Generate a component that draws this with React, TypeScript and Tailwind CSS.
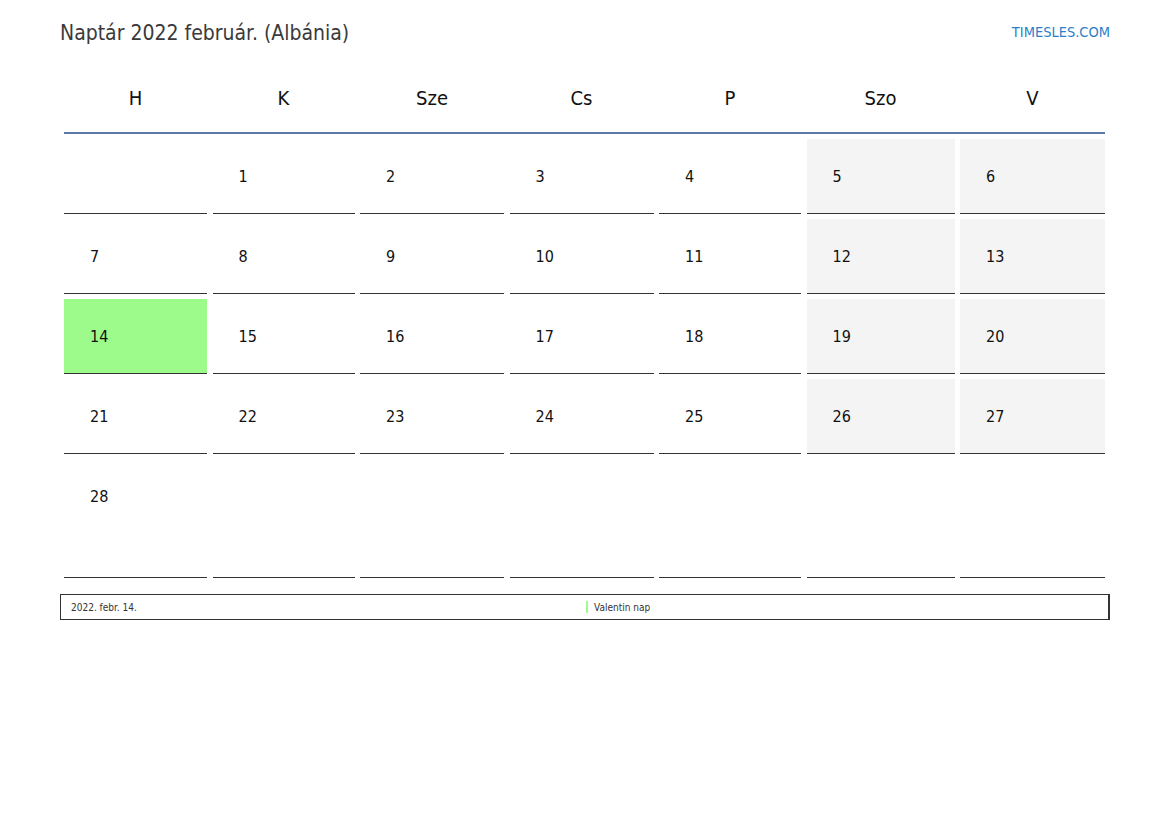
import React from 'react';

const days = ['H', 'K', 'Sze', 'Cs', 'P', 'Szo', 'V'];

const weeks: (number | null)[][] = [
  [null, 1, 2, 3, 4, 5, 6],
  [7, 8, 9, 10, 11, 12, 13],
  [14, 15, 16, 17, 18, 19, 20],
  [21, 22, 23, 24, 25, 26, 27],
  [28, null, null, null, null, null, null],
];

const font = { fontFamily: '"DejaVu Sans Condensed", "DejaVu Sans", sans-serif', fontStretch: 'condensed' as const };

const cols = 'grid grid-cols-[143px_142px_144px_144px_142px_148px_145px] justify-between';

const App: React.FC = () => {
  return (
    <div className="w-[1169px] h-[827px] bg-white text-[#111]" style={font}>
      {/* Title */}
      <div className="pl-[60px] pr-[59px] pt-[19px] flex items-center justify-between h-[47px]">
        <h1 className="text-[21px] leading-[28px] text-[#3a3a3a]">Naptár 2022 február. (Albánia)</h1>
        <a className="text-[14.5px] leading-[20px] text-[#2d7fc9] -mt-[2px]">TIMESLES.COM</a>
      </div>

      <div className="ml-[64px] w-[1041px]">
        {/* Day names */}
        <div className={`mt-[17px] ${cols} h-[70px] border-b-2 border-[#5a7aa5]`}>
          {days.map((d) => (
            <div key={d} className="flex items-center justify-center text-[20px]">
              {d}
            </div>
          ))}
        </div>

        {/* Weeks */}
        <div className={`mt-[5px] ${cols} gap-y-[5px]`}>
          {weeks.map((week, wi) =>
            week.map((n, di) => {
              const weekend = di >= 5 && n !== null;
              const holiday = n === 14;
              const last = wi === weeks.length - 1;
              return (
                <div
                  key={`${wi}-${di}`}
                  className={`${last ? 'h-[119px]' : 'h-[75px]'} border-b border-[#333] pl-[26px] pt-[26px] text-[16px] leading-[24px] ${
                    holiday ? 'bg-[#9dfb8c]' : weekend ? 'bg-[#f4f4f4]' : 'bg-white'
                  }`}
                >
                  {n}
                </div>
              );
            })
          )}
        </div>
      </div>

      {/* Legend */}
      <div className="ml-[60px] mt-[16px] w-[1050px] h-[26px] border border-[#333] border-r-2 flex items-center text-[10px] text-[#333]">
        <div className="w-[525px] pl-[10px]">2022. febr. 14.</div>
        <div className="flex items-center">
          <span className="inline-block w-[2px] h-[12px] bg-[#9dfb8c] mr-[6px]" />
          Valentin nap
        </div>
      </div>
    </div>
  );
};

export default App;
